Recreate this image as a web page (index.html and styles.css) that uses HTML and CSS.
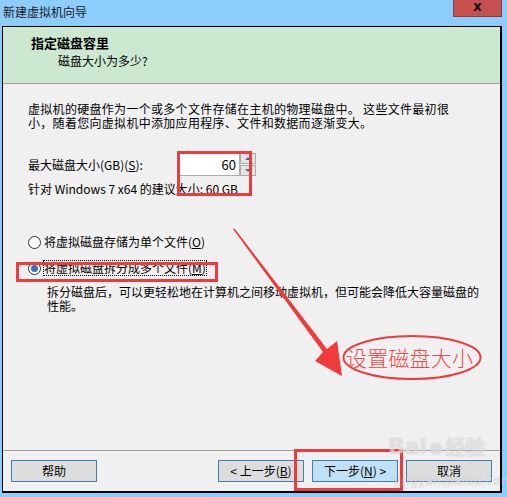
FILE: index.html
```html
<!DOCTYPE html>
<html lang="zh-CN">
<head>
<meta charset="utf-8">
<title>新建虚拟机向导</title>
<link rel="stylesheet" href="styles.css">
</head>
<body>
<div class="titlebar">
  <span class="title">新建虚拟机向导</span>
  <span class="close">X</span>
</div>
<div class="window">
  <div class="header">
    <div class="h-title">指定磁盘容里</div>
    <div class="h-sub">磁盘大小为多少?</div>
  </div>
  <div class="content">
    <p class="intro">虚拟机的硬盘作为一个或多个文件存储在主机的物理磁盘中。 这些文件最初很<br>小，随着您向虚拟机中添加应用程序、文件和数据而逐渐变大。</p>
    <div class="size-row">
      <span class="label">最大磁盘大小(GB)(<u>S</u>):</span>
      <span class="num">60</span>
      <span class="spin"><span class="sb up"></span><span class="sb down"></span></span>
    </div>
    <p class="rec">针对 Windows 7 x64 的建议大小: 60 GB</p>
    <div class="radio r1"><span class="dot"></span><span>将虚拟磁盘存储为单个文件(<u>O</u>)</span></div>
    <div class="radio r2"><span class="dot on"></span><span class="focus">将虚拟磁盘拆分成多个文件(<u>M</u>)</span></div>
    <p class="desc">拆分磁盘后，可以更轻松地在计算机之间移动虚拟机，但可能会降低大容量磁盘的<br>性能。</p>
  </div>
  <div class="footer">
    <span class="btn">帮助</span>
    <span class="spacer"></span>
    <span class="btn">&lt; 上一步(<u>B</u>)</span>
    <span class="btn next">下一步(<u>N</u>) &gt;</span>
    <span class="btn">取消</span>
  </div>
</div>

<svg class="marks" width="507" height="497" viewBox="0 0 507 497">
  <g fill="none" stroke="#ef3b3b" stroke-width="3">
    <rect x="178.5" y="152.5" width="72" height="42"/>
    <rect x="17.5" y="263.5" width="199" height="17"/>
    <rect x="295.5" y="450.5" width="106" height="39"/>
  </g>
  <polygon fill="#ef3b3b" points="233,229 234.5,228.5 327,349 337,341 342,376 315,361 323,352"/>
  <ellipse cx="412" cy="357.5" rx="68.5" ry="21.5" fill="none" stroke="#ef3b3b" stroke-width="2"/>
</svg>
<div class="callout">设置磁盘大小</div>
<div class="wm">
  <div class="wm-top"><span class="bai">Bai</span><span class="paw">●</span><span class="jy">经验</span></div>
  <div class="wm-url">jingyan.baidu.com</div>
</div>
</body>
</html>
```
FILE: styles.css
```css
html, body {
  margin: 0;
  padding: 0;
}
body {
  width: 507px;
  height: 497px;
  background: #8ccdfd;
  font-family: "Noto Sans CJK SC", "Noto Sans", sans-serif;
  font-size: 12px;
  color: #000;
  position: relative;
  overflow: hidden;
}
u { text-decoration: underline; text-underline-offset: 1px; }
p { margin: 0; }

.titlebar {
  height: 26px;
  display: flex;
  justify-content: space-between;
  align-items: flex-start;
}
.title {
  padding-left: 3px;
  line-height: 24px;
  color: #1a1a1a;
}
.close {
  width: 47px;
  height: 16px;
  margin-right: 5px;
  background: #c75050;
  border: 1px solid #8a3b3b;
  border-top: none;
  text-align: center;
  font-family: "DejaVu Sans", sans-serif;
  font-weight: bold;
  font-size: 11px;
  line-height: 16px;
  color: #000;
}

.window {
  margin: 0 5px 0 2px;
  height: 467px;
  box-sizing: border-box;
  border: 1px solid #000;
  border-right-width: 2px;
  border-bottom-width: 2px;
  background: #f0f0f0;
  display: flex;
  flex-direction: column;
}
.header {
  height: 56px;
  background: #cde8d0;
  border-bottom: 1px solid #a0a0a0;
  padding-left: 28px;
  box-sizing: content-box;
}
.h-title {
  font-weight: bold;
  font-size: 13px;
  line-height: 16px;
  margin-top: 8px;
}
.h-sub {
  padding-left: 27px;
  line-height: 16px;
  margin-top: 2px;
}

.content {
  flex: 1;
  padding: 0 0 0 25px;
  line-height: 14px;
}
.intro {
  margin-top: 18px;
  white-space: nowrap;
  letter-spacing: 0.3px;
}
.size-row {
  margin-top: 23px;
  display: flex;
  align-items: center;
  height: 23px;
}
.label {
  width: 149px;
}
.num {
  background: #fff;
  border: 1px solid #abadb3;
  text-align: right;
  padding-right: 3px;
  box-sizing: border-box;
  width: 63px;
  height: 23px;
  line-height: 21px;
  font-size: 13px;
}
.spin {
  display: flex;
  flex-direction: column;
  gap: 1px;
  height: 23px;
  width: 16px;
}
.sb {
  flex: 1;
  background: #e5e5e5;
  border: 1px solid #acacac;
  position: relative;
}
.sb::after {
  content: "";
  position: absolute;
  left: 4px;
  top: 3px;
  border-left: 3px solid transparent;
  border-right: 3px solid transparent;
}
.sb.up::after { border-bottom: 3px solid #4a6fa5; }
.sb.down::after { border-top: 3px solid #4a6fa5; }

.rec {
  margin-top: 6px;
}
.radio {
  display: flex;
  align-items: center;
  gap: 3px;
  height: 14px;
}
.r1 { margin-top: 39px; }
.r2 { margin-top: 12px; }
.dot {
  width: 11px;
  height: 11px;
  border: 1px solid #333;
  border-radius: 50%;
  background: #fff;
  position: relative;
  flex: none;
}
.dot.on::after {
  content: "";
  position: absolute;
  left: 2px;
  top: 2px;
  width: 7px;
  height: 7px;
  border-radius: 50%;
  background: #2f74c0;
}
.focus {
  outline: 1px dotted #000;
  outline-offset: 0;
}
.desc {
  margin-top: 10px;
  padding-left: 19px;
  white-space: nowrap;
}

.footer {
  border-top: 1px solid #a0a0a0;
  padding: 9px 8px 9px 8px;
  display: flex;
  gap: 8px;
}
.spacer { flex: 1; }
.btn {
  width: 86px;
  height: 22px;
  box-sizing: border-box;
  border: 1px solid #3c7fb1;
  background: #dddddd;
  text-align: center;
  line-height: 20px;
  font-size: 12px;
}
.btn.next {
  background: #bfe0f5;
}

.marks {
  position: absolute;
  left: 0;
  top: 0;
  pointer-events: none;
}
.callout {
  position: absolute;
  left: 346px;
  top: 344px;
  font-size: 21px;
  font-weight: 300;
  line-height: 26px;
  color: #f04848;
  letter-spacing: 0.2px;
}
.wm {
  position: absolute;
  left: 388px;
  top: 434px;
  color: rgba(255, 255, 255, 0.55);
  text-shadow: 0 0 1px rgba(120, 120, 120, 0.45);
  font-family: "DejaVu Sans", sans-serif;
}
.wm-top {
  display: flex;
  align-items: center;
  gap: 2px;
}
.bai {
  font-size: 22px;
  font-weight: bold;
  line-height: 26px;
}
.paw {
  font-size: 16px;
}
.jy {
  font-family: "Noto Sans CJK SC", sans-serif;
  font-size: 20px;
  font-weight: bold;
  line-height: 26px;
}
.wm-url {
  font-size: 12px;
  margin-top: 14px;
  padding-left: 6px;
  letter-spacing: 0.5px;
}
```
